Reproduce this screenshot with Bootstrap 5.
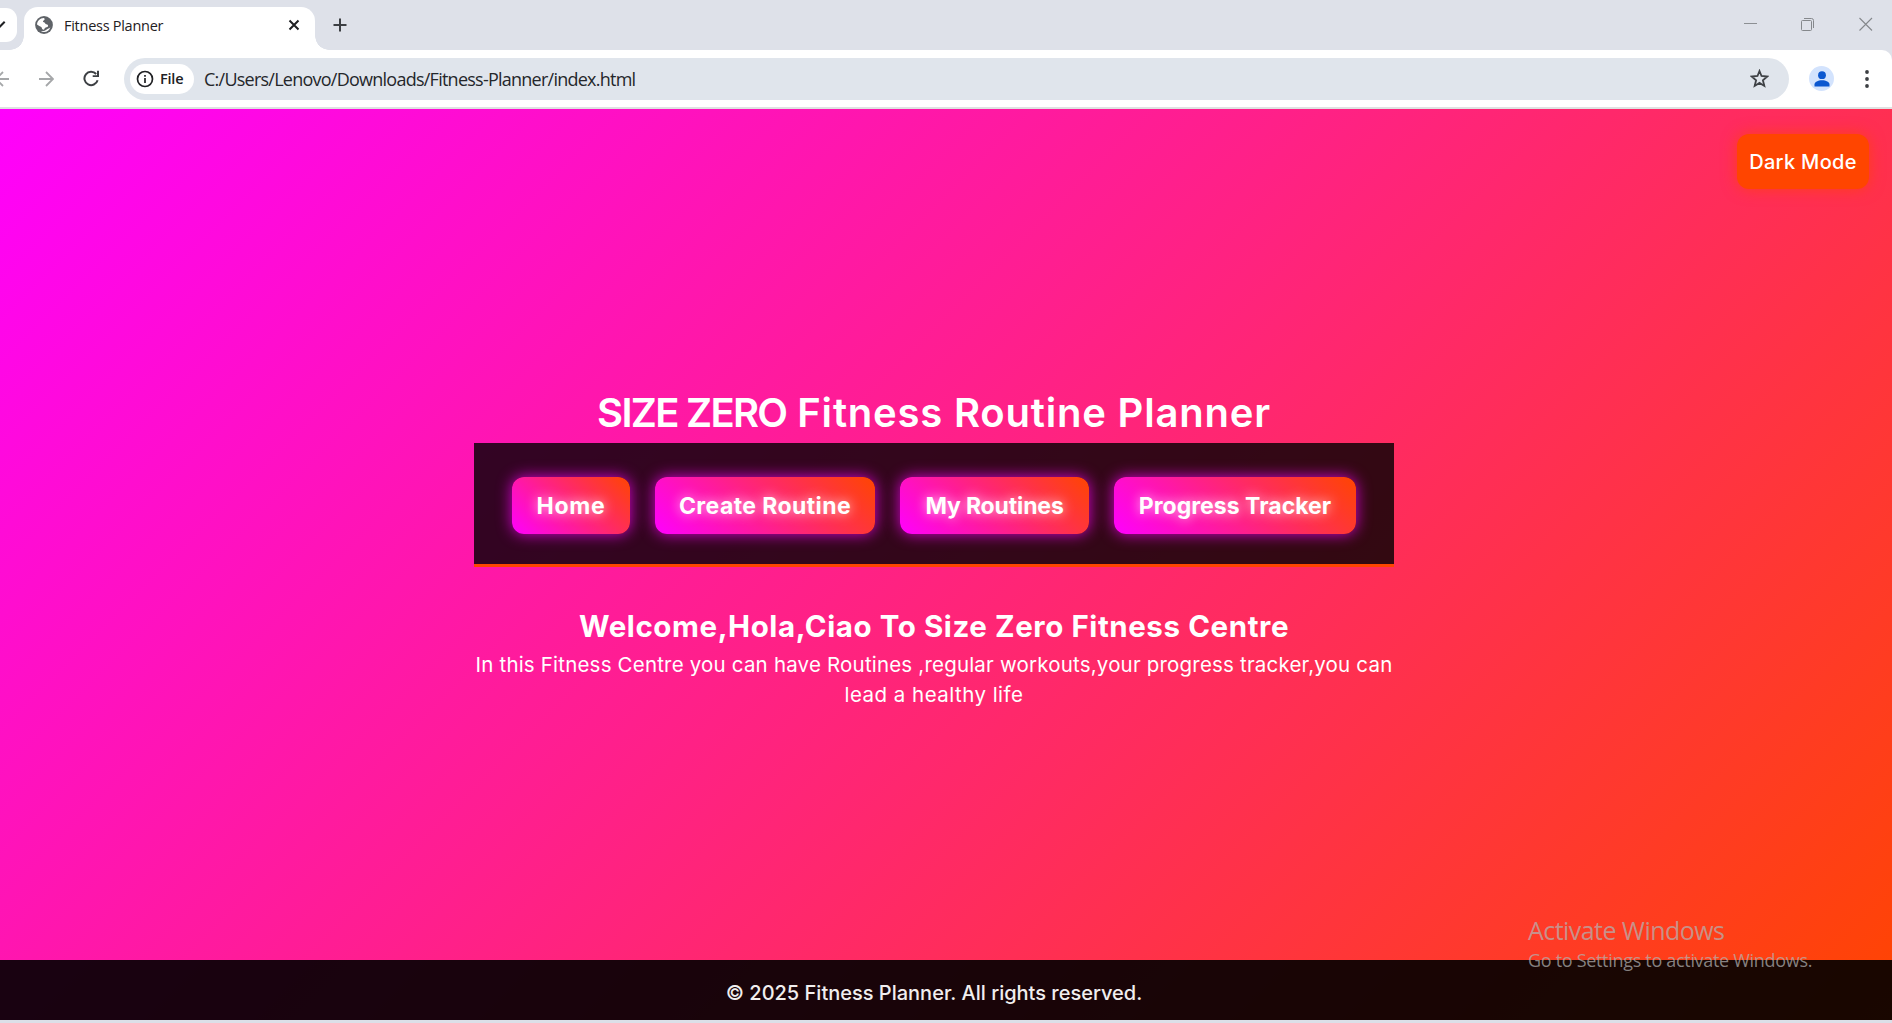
<!DOCTYPE html>
<html lang="en">
<head>
<meta charset="utf-8">
<meta name="viewport" content="width=device-width, initial-scale=1">
<title>Fitness Planner</title>
<link href="https://cdn.jsdelivr.net/npm/bootstrap@5.3.0/dist/css/bootstrap.min.css" rel="stylesheet">
<style>
  html, body { height: 100%; }
  body { font-family: Inter, "Noto Sans", sans-serif; background: #dbdfe8; }
  svg { display: block; flex: none; }
  .sys { font-family: "Open Sans", "Noto Sans", sans-serif; }

  /* Browser window */
  .tab-strip { height: 50px; background: #dee1e9; }
  .tab-search { width: 17px; height: 34px; margin-top: 8px; background: #fff; border-radius: 0 11px 11px 0; }
  .tab-active { position: relative; width: 291px; height: 43px; margin: 7px 0 0 7px; background: #fff; border-radius: 14px 14px 0 0; padding: 0 15px 7px 11px; }
  .tab-active::before, .tab-active::after { content: ""; position: absolute; bottom: 0; width: 14px; height: 14px; }
  .tab-active::before { left: -14px; background: radial-gradient(circle at 0 0, transparent 13.5px, #fff 14px); }
  .tab-active::after { right: -14px; background: radial-gradient(circle at 100% 0, transparent 13.5px, #fff 14px); }
  .tab-title { font-size: 14.5px; letter-spacing: -.27px; margin-left: 11px; padding-top: 1px; color: #1f2023; line-height: 20px; }
  .tab-add { margin: 18px 0 0 18px; }
  .win-controls { gap: 44px; padding: 17px 19px 0 0; }
  .tool-wrap { background: #dee1e9; }
  .tool-bar { height: 57px; background: #fff; border-radius: 0 10px 0 0; }
  .ico-forward { margin-left: 30px; }
  .ico-reload { margin-left: 29px; }
  .ico-menu { margin-left: 31px; }
  .address { width: 1665px; height: 42px; margin-left: 24px; background: #e0e5ec; border-radius: 21px; padding: 0 20px 0 6px; }
  .file-chip { width: 64px; height: 30px; background: #fff; border-radius: 15px; padding-left: 6px; font-size: 14.5px; font-weight: 600; letter-spacing: -.2px; color: #202124; }
  .file-chip span { margin-left: 6px; }
  .url-text { font-size: 18px; letter-spacing: -.755px; margin-left: 10px; padding-top: 1px; color: #25272b; }
  .avatar { width: 25px; height: 25px; background: #d3e3fd; margin-left: 20px; }
  .tool-edge { height: 2px; background: #dfe1e1; }

  /* Planner page */
  .planner { position: relative; height: 911px; background: linear-gradient(135deg, #ff00ff, #ff4500) -24px 0 / 1916px 911px no-repeat; color: #fff; }
  .planner-main { width: 920px; margin-left: 474px; padding-top: 274px; }
  .planner-title { font-size: 40px; font-weight: 600; line-height: 60px; letter-spacing: .8px; }
  .planner-title .caps { letter-spacing: -1.7px; }
  .planner-nav { gap: 25px; padding: 34px 38px 30px; background: rgba(0,0,0,.8); border-bottom: 3px solid #ff4500; }
  .glow-btn { height: 57px; padding: 0; border: 0; border-radius: 12px; background: linear-gradient(45deg, #ff00ff, #ff4500); color: #fff; font-size: 23px; font-weight: 700; line-height: 58px; white-space: nowrap; text-shadow: 0 0 12px rgba(255,255,255,.8); box-shadow: 0 0 15px rgba(255,0,255,.8); }
  .glow-btn:hover { color: #fff; background: linear-gradient(45deg, #ff00ff, #ff4500); }
  .w-home { width: 118px; letter-spacing: .8px; }
  .w-create { width: 220px; letter-spacing: .41px; }
  .w-mine { width: 189px; letter-spacing: -.138px; }
  .w-progress { width: 242px; letter-spacing: .028px; }
  .welcome-title { font-size: 29.5px; font-weight: 700; line-height: 47px; letter-spacing: .58px; padding-top: 36px; }
  .welcome-text { font-size: 20.5px; line-height: 30px; letter-spacing: .19px; margin: 0 -10px; }
  .welcome-text .last-line { letter-spacing: .47px; }
  .theme-btn { position: absolute; top: 25px; right: 23px; width: 132px; height: 55px; padding: 0; border: 0; border-radius: 12px; background: #ff4500; color: #fff; font-size: 20px; font-weight: 500; letter-spacing: .307px; line-height: 56px; box-shadow: 0 0 15px rgba(255,69,0,.7); }
  .planner-foot { height: 60px; padding: 5px 24px 0 0; background: rgba(0,0,0,.9); font-size: 20px; font-weight: 500; color: #f1eeef; }
  .activation { position: absolute; left: 1528px; top: 803px; color: rgba(178,178,178,.72); white-space: nowrap; }
  .activation .line-a { font-size: 25px; line-height: 36px; letter-spacing: -.551px; }
  .activation .line-b { font-size: 18px; line-height: 24px; letter-spacing: -.31px; }
</style>
<script src="https://cdn.jsdelivr.net/npm/bootstrap@5.3.0/dist/js/bootstrap.bundle.min.js"></script>
</head>
<body class="overflow-hidden">
<header class="sys">
  <div class="tab-strip d-flex align-items-start">
    <div class="tab-search d-flex align-items-center">
      <svg width="6" height="10" viewBox="0 0 6 10"><path d="M-3 3 0 6.500 4.700 1.800" fill="none" stroke="#1f2023" stroke-width="2"/></svg>
    </div>
    <div class="tab-active d-flex align-items-center">
      <svg width="18" height="18" viewBox="0 0 18 18"><circle cx="9" cy="9" r="8.900" fill="#5f6368"/><path d="M2 8.500C2.200 5 5 2.300 8.700 2.100 10 2.300 10 4 8.800 4.500 7.500 4.800 7.800 6 9 6.300c1.400.3 1 1.800 2.200 2 1.600.2 2.300 1.200 1.700 2.300-.6 1-2.100.6-2.900 1.300-.9.800-.4 1.700-1.600 1.800-1.500 0-1.300-1.600-2.100-2.600C5.200 9.900 3.500 10 2 8.500Z" fill="#fff"/><path d="M6 15.200c1.700-.3 2.500.1 3.700-.4 1.300-.6 2-1.600 3.200-2 1-.3 1.700-1 2.500-1.600C14.500 14.200 12.200 16 9 16c-1.100 0-2.100-.3-3-.8Z" fill="#fff"/></svg>
      <span class="tab-title">Fitness Planner</span>
      <svg class="ms-auto" width="12" height="12" viewBox="0 0 12 12"><path d="m1.500 1.500 9 9m0-9-9 9" stroke="#1f2023" stroke-width="2"/></svg>
    </div>
    <svg class="tab-add" width="14" height="14" viewBox="0 0 14 14"><path d="M7 .5v13M.5 7h13" stroke="#3c3f43" stroke-width="2"/></svg>
    <div class="win-controls d-flex ms-auto">
      <svg width="14" height="14" viewBox="0 0 14 14"><path d="M1 6.500h13" stroke="#8c8f93"/></svg>
      <svg width="14" height="14" viewBox="0 0 14 14" fill="none" stroke="#85888c"><rect x=".5" y="3.500" width="10" height="10" rx="1"/><path d="M3 1.500h7.500a2 2 0 0 1 2 2V11"/></svg>
      <svg width="14" height="14" viewBox="0 0 14 14"><path d="m.5 1 12.500 12.500m0-12.500L.5 13.500" stroke="#85888c" stroke-width="1.100"/></svg>
    </div>
  </div>
  <div class="tool-wrap">
    <div class="tool-bar d-flex align-items-center">
      <svg width="9" height="16" viewBox="0 0 9 16" fill="none" stroke="#a5a7a9" stroke-width="1.800"><path d="M9 8H-3M3 1l-7 7 7 7"/></svg>
      <svg class="ico-forward" width="15" height="16" viewBox="0 0 15 16" fill="none" stroke="#a5a7a9" stroke-width="1.800"><path d="M0 8h13.500M7 1l7 7-7 7"/></svg>
      <svg class="ico-reload" width="17" height="17" viewBox="0 0 17 17"><path d="M14.600 10.200A6.700 6.700 0 1 1 13.200 4" fill="none" stroke="#3c3f43" stroke-width="2"/><path d="M16 .8v6.300H9.700V5.200H14V.8Z" fill="#3c3f43"/></svg>
      <div class="address d-flex align-items-center">
        <div class="file-chip d-flex align-items-center">
          <svg width="18" height="18" viewBox="0 0 18 18"><circle cx="9" cy="9" r="7.500" fill="none" stroke="#202124" stroke-width="1.700"/><path d="M9 8v5M9 5v1.800" stroke="#202124" stroke-width="1.700"/></svg>
          <span>File</span>
        </div>
        <span class="url-text">C:/Users/Lenovo/Downloads/Fitness-Planner/index.html</span>
        <svg class="ms-auto" width="19" height="19" viewBox="0 0 19 19"><path d="m9.500 2 2 5 5.800.5-4.400 3.800 1.400 5.600-4.800-3-4.800 3 1.400-5.600-4.400-3.800L7.500 7Z" fill="none" stroke="#3f4246" stroke-width="1.800"/></svg>
      </div>
      <div class="avatar rounded-circle d-flex align-items-center justify-content-center">
        <svg width="16" height="16" viewBox="0 0 16 16" fill="#0b57d0"><circle cx="8" cy="4.200" r="3.900"/><path d="M.5 15.500v-2C.5 11 4 9.300 8 9.300s7.500 1.700 7.500 4.200v2Z"/></svg>
      </div>
      <svg class="ico-menu" width="4" height="18" viewBox="0 0 4 18" fill="#3c3f43"><circle cx="2" cy="2" r="1.900"/><circle cx="2" cy="9" r="1.900"/><circle cx="2" cy="16" r="1.900"/></svg>
    </div>
    <div class="tool-edge"></div>
  </div>
</header>

<div class="planner d-flex flex-column">
  <button class="btn theme-btn" type="button">Dark Mode</button>
  <main class="planner-main text-center">
    <h1 class="planner-title m-0"><span class="caps">SIZE ZERO</span> Fitness Routine Planner</h1>
    <nav class="planner-nav d-flex">
      <a class="btn glow-btn w-home" href="#">Home</a>
      <a class="btn glow-btn w-create" href="#">Create Routine</a>
      <a class="btn glow-btn w-mine" href="#">My Routines</a>
      <a class="btn glow-btn w-progress" href="#">Progress Tracker</a>
    </nav>
    <h2 class="welcome-title m-0">Welcome,Hola,Ciao To Size Zero Fitness Centre</h2>
    <p class="welcome-text">In this Fitness Centre you can have Routines ,regular workouts,your progress tracker,you can<br><span class="last-line">lead a healthy life</span></p>
  </main>
  <footer class="planner-foot mt-auto d-flex align-items-center justify-content-center">© 2025 Fitness Planner. All rights reserved.</footer>
  <div class="activation sys">
    <div class="line-a">Activate Windows</div>
    <div class="line-b">Go to Settings to activate Windows.</div>
  </div>
</div>
</body>
</html>
